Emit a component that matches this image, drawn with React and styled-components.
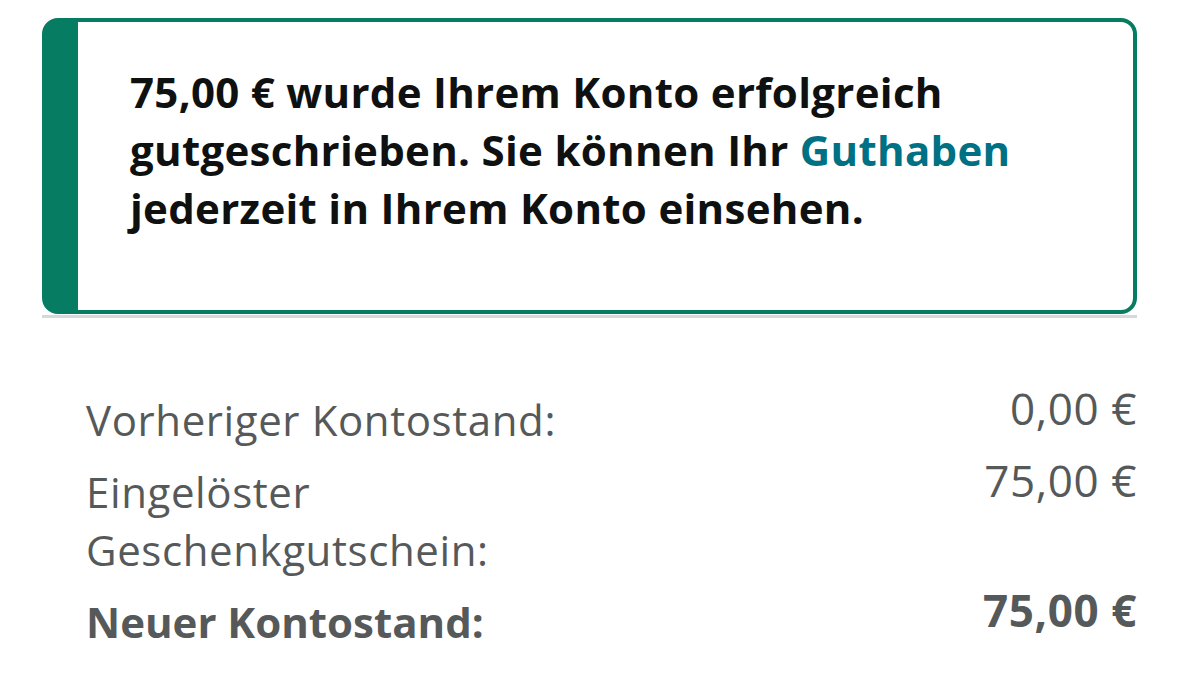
import styled, { createGlobalStyle } from 'styled-components'

const Global = createGlobalStyle`
  body {
    margin: 0;
    background: #fff;
    font-family: "Open Sans", "Noto Sans", sans-serif;
  }
`

const rows = [
  { label: 'Vorheriger Kontostand:', value: '0,00 €' },
  { label: 'Eingelöster Geschenkgutschein:', value: '75,00 €', narrow: true },
  { label: 'Neuer Kontostand:', value: '75,00 €', bold: true },
]

export default function App() {
  return (
    <Page>
      <Global />
      <AlertWrap>
        <Alert>
          <AlertText>
            75,00 € wurde Ihrem Konto erfolgreich gutgeschrieben. Sie können Ihr{' '}
            <Link href="#">Guthaben</Link> jederzeit in Ihrem Konto einsehen.
          </AlertText>
        </Alert>
      </AlertWrap>

      <Summary>
        {rows.map((r) => (
          <Row key={r.label}>
            <Label $bold={r.bold} $narrow={r.narrow}>{r.label}</Label>
            <Value $bold={r.bold}>{r.value}</Value>
          </Row>
        ))}
      </Summary>
    </Page>
  )
}

const Page = styled.div`
  padding: 18px 42px 0 42px;
`

const AlertWrap = styled.div`
  border-bottom: 3px solid #d5d9d9;
  padding-bottom: 1px;
`

const Alert = styled.div`
  height: 296px;
  box-sizing: border-box;
  border: 4px solid #067d62;
  border-left: 36px solid #067d62;
  border-radius: 16px;
  padding: 41px 40px 0 52px;
`

const AlertText = styled.p`
  margin: 0;
  max-width: 940px;
  font-size: 42px;
  line-height: 58px;
  font-weight: 700;
  letter-spacing: 0.3px;
  color: #0f1111;
`

const Link = styled.a`
  color: #007185;
  text-decoration: none;
`

const Summary = styled.div`
  padding: 73px 0 0 44px;
  display: flex;
  flex-direction: column;
  gap: 14px;
`

const Row = styled.div`
  display: flex;
  justify-content: space-between;
  align-items: flex-start;
  color: #565959;
`

const Label = styled.div`
  font-size: 42px;
  line-height: 58px;
  letter-spacing: ${(p) => (p.$bold ? '0' : '0.6px')};
  font-weight: ${(p) => (p.$bold ? 700 : 400)};
  max-width: ${(p) => (p.$narrow ? '500px' : 'none')};
`

const Value = styled.div`
  font-size: 44px;
  line-height: 44px;
  letter-spacing: 0.6px;
  margin-top: -5px;
  font-weight: ${(p) => (p.$bold ? 700 : 400)};
`
